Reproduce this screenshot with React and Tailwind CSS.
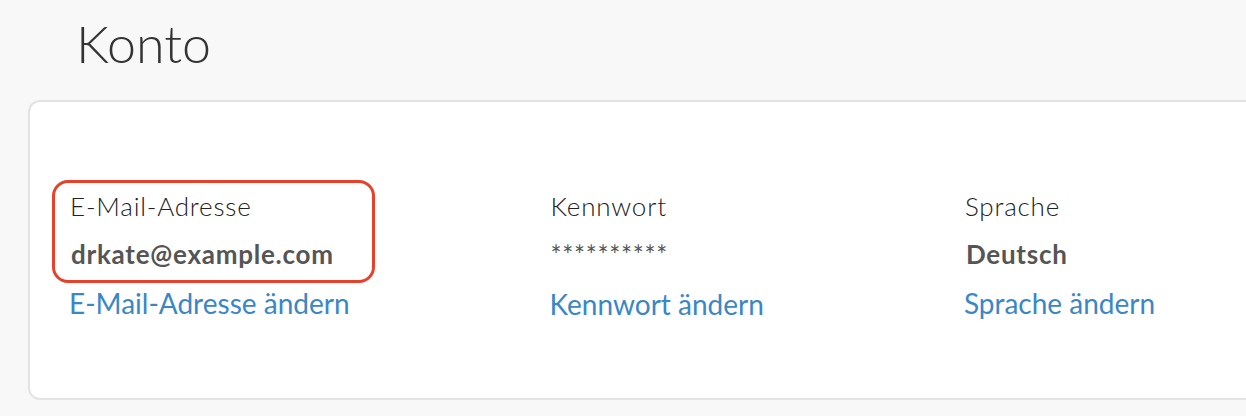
import React from 'react';

const fields = [
    { label: 'E-Mail-Adresse', value: 'drkate@example.com', link: 'E-Mail-Adresse ändern', highlight: true },
    { label: 'Kennwort', value: '**********', link: 'Kennwort ändern', secret: true },
    { label: 'Sprache', value: 'Deutsch', link: 'Sprache ändern' },
];

const App = () => {
    return (
        <div className="w-[1246px] h-[416px] overflow-hidden bg-[#f8f8f8] font-['Lato','Liberation_Sans',sans-serif]">
            {/* title */}
            <h1 className="pl-[76px] pt-[12px] h-[100px] text-[52px] leading-[62px] font-light text-[#333]">
                Konto
            </h1>

            {/* card */}
            <div className="ml-[28px] w-[1260px] h-[300px] bg-white border-2 border-[#e3e3e3] rounded-[12px] pl-[39px] pt-[86px]">
                <div className="flex gap-[200px]">
                    {fields.map(f => (
                        <div key={f.label} className="relative flex flex-col">
                            <div className="h-[36px] pl-[1px] text-[26px] leading-[36px] font-light tracking-[0.8px] text-[#222]">{f.label}</div>
                            {f.secret ? (
                                <div className="mt-[13px] h-[36px] pl-[1px] text-[26px] leading-[36px] tracking-[0.7px] text-[#555]">{f.value}</div>
                            ) : (
                                <div className="mt-[12px] h-[36px] pl-[2px] text-[26px] leading-[36px] font-bold tracking-[0.75px] text-[#555]">{f.value}</div>
                            )}
                            <a href="#" className="mt-[13px] h-[36px] text-[28px] leading-[36px] text-[#3a87c6]">{f.link}</a>
                            {f.highlight && (
                                <div className="absolute left-[-17px] top-[-8px] w-[323px] h-[103px] border-[3px] border-[#e5412b] rounded-[16px]" />
                            )}
                        </div>
                    ))}
                </div>
            </div>
        </div>
    );
};

export default App;
